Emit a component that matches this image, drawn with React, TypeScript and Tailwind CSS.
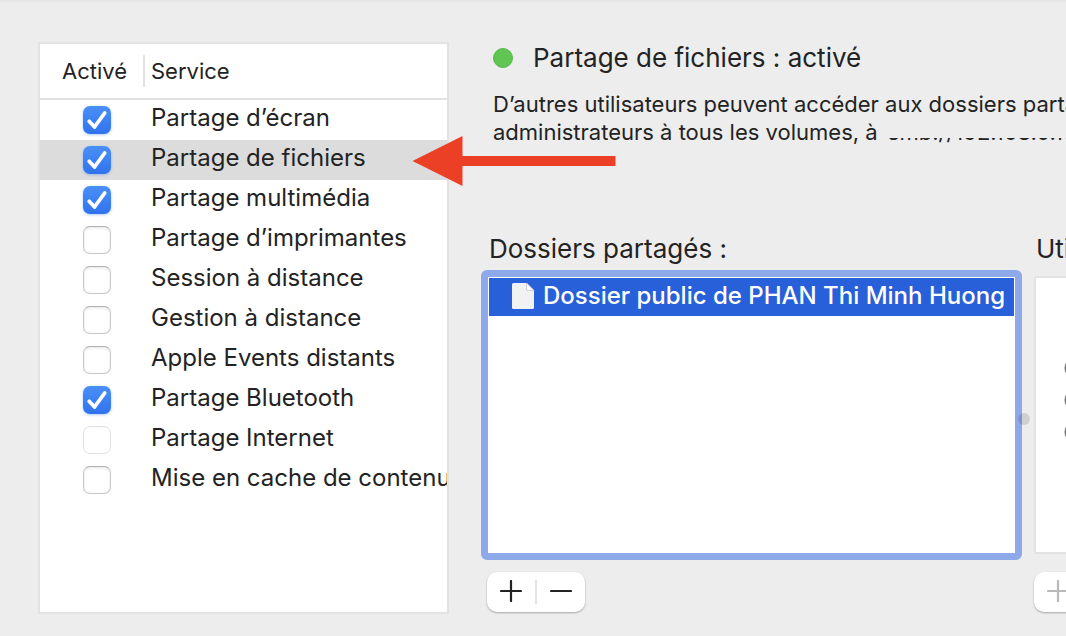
import { useState } from "react";

type Service = {
  id: string;
  name: string;
  enabled: boolean;
  locked?: boolean;
};

const initialServices: Service[] = [
  { id: "screen", name: "Partage d’écran", enabled: true },
  { id: "files", name: "Partage de fichiers", enabled: true },
  { id: "media", name: "Partage multimédia", enabled: true },
  { id: "printers", name: "Partage d’imprimantes", enabled: false },
  { id: "login", name: "Session à distance", enabled: false },
  { id: "management", name: "Gestion à distance", enabled: false },
  { id: "events", name: "Apple Events distants", enabled: false },
  { id: "bluetooth", name: "Partage Bluetooth", enabled: true },
  { id: "internet", name: "Partage Internet", enabled: false, locked: true },
  { id: "cache", name: "Mise en cache de contenu", enabled: false },
];

function Checkbox({ service, onToggle }: { service: Service; onToggle: () => void }) {
  return (
    <span className="relative mx-auto block h-7 w-7">
      <input
        id={service.id}
        type="checkbox"
        checked={service.enabled}
        disabled={service.locked}
        onChange={onToggle}
        className="block h-7 w-7 appearance-none rounded-[7px] border border-[#c8c8c8] border-t-[#b0b0b0] bg-white shadow-[inset_0_1px_3px_rgba(0,0,0,0.1)] checked:border-0 checked:bg-linear-to-b checked:from-[#4a8ff6] checked:to-[#3173f0] checked:shadow-[0_1px_3px_rgba(60,130,250,0.4)] disabled:border-[#e2e2e2] disabled:shadow-[inset_0_1px_3px_rgba(0,0,0,0.03)]"
      />
      {service.enabled && (
        <svg viewBox="0 0 28 28" fill="none" className="pointer-events-none absolute inset-0 h-7 w-7">
          <path d="M6.2 15.3L11.5 21L21.7 7" stroke="white" strokeWidth="3.8" strokeLinecap="round" strokeLinejoin="round" />
        </svg>
      )}
    </span>
  );
}

function PlusIcon() {
  return (
    <svg width="22" height="22" viewBox="0 0 22 22" fill="none">
      <path d="M11 1V21M1 11H21" stroke="currentColor" strokeWidth="2.2" strokeLinecap="round" />
    </svg>
  );
}

function MinusIcon() {
  return (
    <svg width="22" height="22" viewBox="0 0 22 22" fill="none">
      <path d="M1 11H21" stroke="currentColor" strokeWidth="2.2" strokeLinecap="round" />
    </svg>
  );
}

function AddRemove({ disabled = false }: { disabled?: boolean }) {
  return (
    <div className="flex h-10 w-[98px] items-center rounded-[10px] bg-white shadow-[0_1px_2px_rgba(0,0,0,0.3)]">
      <button
        disabled={disabled}
        aria-label="Ajouter"
        className="flex h-full flex-1 items-center justify-center pb-[2px] disabled:text-[#b9b9b9]"
      >
        <PlusIcon />
      </button>
      <span className="h-6 w-[2px] bg-[#e3e3e3]" />
      <button
        disabled={disabled}
        aria-label="Supprimer"
        className="flex h-full flex-1 items-center justify-center pb-[2px] disabled:text-[#b9b9b9]"
      >
        <MinusIcon />
      </button>
    </div>
  );
}

function DocumentIcon() {
  return (
    <svg width="24" height="28" viewBox="0 0 24 28" fill="none" className="shrink-0">
      <path d="M2.5 1H15.5L23 8.5V25.5Q23 27 21.5 27H2.5Q1 27 1 25.5V2.5Q1 1 2.5 1Z" fill="#f2f2f2" />
      <path d="M15.5 1L23 8.5H17Q15.5 8.5 15.5 7Z" fill="#fff" stroke="#c9c9c9" strokeWidth="0.8" strokeLinejoin="round" />
    </svg>
  );
}

function UserIcon() {
  return (
    <svg width="20" height="20" viewBox="0 0 20 20" fill="none">
      <circle cx="10" cy="10" r="8.5" stroke="#777" strokeWidth="2" />
    </svg>
  );
}

export default function App() {
  const [services, setServices] = useState<Service[]>(initialServices);
  const [selectedId, setSelectedId] = useState("files");

  function toggle(id: string) {
    setServices((list) => list.map((s) => (s.id === id ? { ...s, enabled: !s.enabled } : s)));
  }

  return (
    <main className="relative flex min-h-screen overflow-hidden border-t-2 border-[#e6e6e6] bg-[#ededed] pt-10 pb-[22px] pl-[38px] font-['Inter','Liberation_Sans',sans-serif] text-[#232323]">
      {/* Services */}
      <section className="w-[411px] shrink-0 overflow-hidden border-2 border-[#e2e2e2] bg-white">
        <table className="w-full table-fixed border-separate border-spacing-0 text-left">
          <thead>
            <tr className="text-[22px] leading-8">
              <th className="h-14 w-[105px] border-b-2 border-[#e2e2e2] p-0 font-normal">
                <div className="border-r-2 border-[#e2e2e2] pl-[22px]">Activé</div>
              </th>
              <th className="h-14 border-b-2 border-[#e2e2e2] p-0 pl-[6px] font-normal">Service</th>
            </tr>
          </thead>
          <tbody>
            {services.map((s) => (
              <tr
                key={s.id}
                onClick={() => setSelectedId(s.id)}
                className={`h-10 ${s.id === selectedId ? "bg-[#dcdcdc]" : ""}`}
              >
                <td className="p-0 pl-2">
                  <Checkbox service={s} onToggle={() => toggle(s.id)} />
                </td>
                <td className="overflow-hidden p-0 pb-1 pl-[6px] text-2xl whitespace-nowrap">
                  <label htmlFor={s.id}>{s.name}</label>
                </td>
              </tr>
            ))}
          </tbody>
        </table>
      </section>

      {/* Details */}
      <section className="flex min-w-0 flex-1 flex-col pl-8">
        <div className="flex items-center gap-5 pl-3">
          <span className="h-5 w-5 rounded-full border border-[#58b84c] bg-[#61c554]" />
          <h1 className="text-[26px] leading-8">Partage de fichiers : activé</h1>
        </div>
        <p className="mt-4 pl-3 text-[22px] leading-7 whitespace-nowrap">
          D’autres utilisateurs peuvent accéder aux dossiers partagés et les
          <br />
          administrateurs à tous les volumes, à{" "}
          <span className="relative ml-1 inline-block">
            smb://192.168.0.10
            <span className="absolute inset-x-0 top-1 h-4 bg-[#ededed]" />
          </span>
        </p>

        <div className="mt-[87px] flex flex-1 gap-3">
          <div className="flex w-[541px] shrink-0 flex-col">
            <h2 className="pl-2 text-[26px] leading-8">Dossiers partagés :</h2>
            <div className="mt-[5px] flex-1 rounded-md border-[7px] border-[#8ea9e9] bg-white p-px">
              <div className="flex h-[38px] items-center gap-2 bg-[#2860d9] pb-[2px] pl-[22px] text-2xl font-medium whitespace-nowrap text-white">
                <DocumentIcon />
                Dossier public de PHAN Thi Minh Huong
              </div>
            </div>
            <div className="mt-3 mb-[2px] pl-[6px]">
              <AddRemove />
            </div>
          </div>

          <div className="relative flex w-[440px] shrink-0 flex-col">
            <h2 className="pl-[2px] text-[26px] leading-8">Utilisateurs :</h2>
            <div className="mt-[11px] mb-[6px] flex flex-1 flex-col gap-3 border-2 border-[#e2e2e2] bg-white pt-20 pl-7">
              <UserIcon />
              <UserIcon />
              <UserIcon />
            </div>
            <div className="mt-3 mb-[2px]">
              <AddRemove disabled />
            </div>
            {/* Splitter handle */}
            <span className="absolute top-[180px] -left-4 h-3 w-3 rounded-full bg-black/12" />
          </div>
        </div>
      </section>

      {/* Arrow to the selected service */}
      <svg width="204" height="50" viewBox="0 0 204 50" className="pointer-events-none absolute top-[134px] left-[412px]">
        <path d="M0.5 25L50.5 0V20H203.5V30H50.5V50Z" fill="#eb4026" />
      </svg>
    </main>
  );
}
